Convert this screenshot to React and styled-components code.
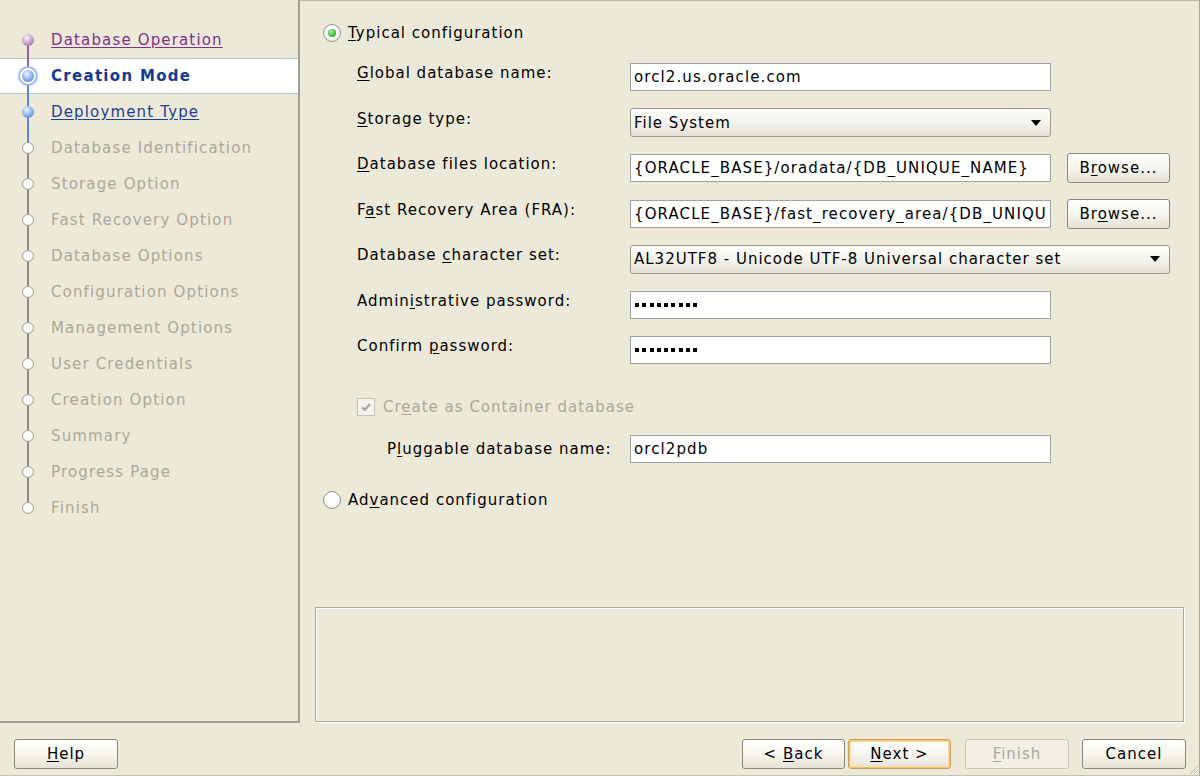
import React from 'react';
import styled, { createGlobalStyle, css } from 'styled-components';

const GlobalStyle = createGlobalStyle`
  html, body { margin: 0; padding: 0; }
  body {
    width: 1200px; height: 776px; overflow: hidden;
    background: #ECE9D8;
    font-family: "DejaVu Sans", Verdana, sans-serif;
  }
`;

const Window = styled.div`
  position: relative;
  width: 1200px; height: 776px;
  box-sizing: border-box;
  display: flex; flex-direction: column;
  background: #ECE9D8;
  border-right: 1px solid #a7a69c;
  border-bottom: 1px solid #c4c2b5;
  font-family: "DejaVu Sans", Verdana, sans-serif;
  font-size: 15px;
  letter-spacing: 1px;
  color: #000;
`;

const Body = styled.div`
  display: flex;
  height: 723px;
`;

/* ---------- Sidebar ---------- */
const Sidebar = styled.nav`
  width: 300px;
  flex: none;
  box-sizing: border-box;
  border-right: 2px solid #a09f95;
  border-bottom: 2px solid #a09f95;
  padding-top: 22px;
`;

const lineColors = { visited: '#9b5ca0', link: '#5a86d4', pending: '#8d8d88' };

const Step = styled.div`
  height: 36px;
  box-sizing: border-box;
  display: flex;
  align-items: center;
  ${p => p.$current && css`
    background: #fff;
    border-top: 1px solid #b3c3da;
    border-bottom: 1px solid #b3c3da;
  `}
`;

const Track = styled.div`
  position: relative;
  width: 51px;
  height: 36px;
  flex: none;
  display: flex;
  align-items: center;
  padding-left: 18px;
  box-sizing: border-box;
  &::before, &::after {
    content: '';
    position: absolute;
    left: 27px;
    width: 2px;
  }
  &::before {
    top: 0; height: 18px;
    background: ${p => p.$top || 'transparent'};
  }
  &::after {
    bottom: 0; height: 18px;
    background: ${p => p.$bottom || 'transparent'};
  }
`;

const NodeBox = styled.div`
  position: relative;
  z-index: 1;
  width: 20px; height: 20px;
  display: flex; align-items: center; justify-content: center;
`;

const bulletStyles = {
  visited: css`
    width: 12px; height: 12px;
    background: radial-gradient(circle at 40% 32%, #fbf2fb 0%, #d7b9da 35%, #a777ad 80%, #8e5a94 100%);
  `,
  current: css`
    width: 12px; height: 12px;
    background: radial-gradient(circle at 40% 32%, #f1f6ff 0%, #a9c6f2 35%, #5d8fe0 80%, #3f6fc9 100%);
    box-shadow: 0 0 0 2px #ffffff, 0 0 0 3.5px #8fb1e4, 0 0 3px 4px rgba(150,185,235,0.6);
  `,
  link: css`
    width: 12px; height: 12px;
    background: radial-gradient(circle at 40% 32%, #f1f6ff 0%, #a9c6f2 35%, #5d8fe0 80%, #3f6fc9 100%);
  `,
  pending: css`
    width: 12px; height: 12px;
    border: 1px solid #a4a49c;
    background: radial-gradient(circle at 42% 35%, #ffffff 45%, #dcdcd6 100%);
  `,
};

const Bullet = styled.span`
  display: block;
  border-radius: 50%;
  box-sizing: border-box;
  ${p => bulletStyles[p.$state]}
`;

const stepText = {
  visited: css`color: #83308b; text-decoration: underline;`,
  current: css`color: #153b8e; font-weight: bold; letter-spacing: 1.3px;`,
  link: css`color: #1d3d96; text-decoration: underline;`,
  pending: css`color: #aca899;`,
};

const StepLabel = styled.span`
  white-space: nowrap;
  letter-spacing: 1.15px;
  text-underline-offset: 2px;
  ${p => stepText[p.$state]}
`;

/* ---------- Main ---------- */
const Main = styled.main`
  flex: 1;
  display: flex;
  flex-direction: column;
  padding: 0 15px;
  border-top: 1px solid #b9b8ae;
  min-width: 0;
`;

const Form = styled.div`
  flex: 1;
  padding: 23px 0 0 8px;
  display: flex;
  flex-direction: column;
`;

const OptionRow = styled.label`
  display: flex;
  align-items: center;
  gap: 7px;
  height: 18px;
  margin-top: ${p => p.$mt || 0}px;
  white-space: nowrap;
`;

const Radio = styled.span`
  width: 18px; height: 18px;
  flex: none;
  box-sizing: border-box;
  border-radius: 50%;
  border: 1px solid #97968c;
  background: radial-gradient(circle at 50% 40%, #ffffff 40%, #e3e1d6 100%);
  display: flex; align-items: center; justify-content: center;
  &::after {
    content: '';
    display: ${p => (p.$checked ? 'block' : 'none')};
    width: 8px; height: 8px;
    border-radius: 50%;
    background: radial-gradient(circle at 40% 35%, #b6f0a8 0%, #44c03a 55%, #1f8d1c 100%);
  }
`;

const U = styled.span`
  text-decoration: underline;
  text-underline-offset: 2px;
`;

const FieldGrid = styled.div`
  margin: 20px 0 0 34px;
  display: grid;
  grid-template-columns: 257px 421px 103px;
  column-gap: 16px;
  grid-auto-rows: 30px;
  row-gap: 15.5px;
`;

const Label = styled.span`
  grid-column: 1;
  align-self: start;
  line-height: 16px;
  padding-top: 3px;
  white-space: nowrap;
`;

const TextField = styled.div`
  grid-column: 2;
  align-self: center;
  height: 28px;
  width: ${p => p.$width || 'auto'};
  box-sizing: border-box;
  border: 1px solid #9fa2a5;
  background: #fff;
  display: flex;
  align-items: center;
  padding: 0 3px;
  overflow: hidden;
`;

const FieldText = styled.span`
  display: block;
  width: 100%;
  overflow: hidden;
  white-space: nowrap;
  letter-spacing: 1.1px;
`;

const Select = styled.div`
  grid-column: ${p => (p.$wide ? '2 / 4' : '2')};
  align-self: center;
  height: 29px;
  box-sizing: border-box;
  border: 1px solid #9b9a90;
  border-radius: 3px;
  background: linear-gradient(#fdfdfb 0%, #f4f3ee 50%, #e4e2d6 100%);
  display: flex;
  align-items: center;
  justify-content: space-between;
  padding: 0 9px 0 3px;
  white-space: nowrap;
  letter-spacing: 1px;
`;

const Arrow = styled.span`
  width: 0; height: 0;
  border-left: 5px solid transparent;
  border-right: 5px solid transparent;
  border-top: 6px solid #000;
`;

const Button = styled.button`
  flex: none;
  width: ${p => p.$w || 103}px;
  height: 30px;
  margin-left: ${p => p.$ml || 0}px;
  box-sizing: border-box;
  border: 1px solid #8a897f;
  border-radius: 3px;
  background: linear-gradient(#ffffff 0%, #f7f6f1 45%, #e6e3d6 100%);
  font-family: "DejaVu Sans", Verdana, sans-serif;
  font-size: 15px;
  letter-spacing: 1px;
  color: #000;
  padding: 0;
  ${p => p.$grid && css`grid-column: 3; align-self: center;`}
  ${p => p.$focus && css`
    border-color: #c7a25e;
    box-shadow: inset 0 0 0 1px #f6c36c, inset 0 0 0 2px #fbdca3;
  `}
  ${p => p.$disabled && css`
    border-color: #cac8bb;
    background: #f1efe6;
    color: #aca899;
  `}
`;

const Dots = styled.span`
  display: flex;
  gap: 3.3px;
  padding-left: 1px;
  & > i {
    display: block;
    width: 4px; height: 4px;
    background: #000;
  }
`;

const CheckRow = styled.label`
  display: flex;
  align-items: center;
  gap: 8px;
  height: 18px;
  margin: 33px 0 0 34px;
  color: #aca899;
  white-space: nowrap;
`;

const CheckBox = styled.span`
  width: 18px; height: 18px;
  box-sizing: border-box;
  border: 1px solid #c4c2b5;
  background: #f4f3ee;
  display: flex; align-items: center; justify-content: center;
`;

const PdbRow = styled.div`
  display: flex;
  align-items: center;
  margin: 19px 0 0 64px;
  height: 28px;
`;

const PdbLabel = styled.span`
  width: 243px;
  white-space: nowrap;
`;

const MessageBox = styled.div`
  height: 115px;
  margin-bottom: 1px;
  box-sizing: border-box;
  border: 1px solid #aca899;
  box-shadow: inset 1px 1px 0 #ffffff, 1px 1px 0 #ffffff;
`;

/* ---------- Button bar ---------- */
const ButtonBar = styled.div`
  flex: 1;
  display: flex;
  align-items: flex-start;
  padding: 16px 13px 0 14px;
`;

const Spacer = styled.div`
  flex: 1;
`;

const Grip = styled.svg`
  position: absolute;
  right: 0;
  bottom: 0;
`;

const steps = [
  { label: 'Database Operation', state: 'visited' },
  { label: 'Creation Mode', state: 'current' },
  { label: 'Deployment Type', state: 'link' },
  { label: 'Database Identification', state: 'pending' },
  { label: 'Storage Option', state: 'pending' },
  { label: 'Fast Recovery Option', state: 'pending' },
  { label: 'Database Options', state: 'pending' },
  { label: 'Configuration Options', state: 'pending' },
  { label: 'Management Options', state: 'pending' },
  { label: 'User Credentials', state: 'pending' },
  { label: 'Creation Option', state: 'pending' },
  { label: 'Summary', state: 'pending' },
  { label: 'Progress Page', state: 'pending' },
  { label: 'Finish', state: 'pending' },
];

const Mn = ({ text, at }) => (
  <>
    {text.slice(0, at)}
    <U>{text[at]}</U>
    {text.slice(at + 1)}
  </>
);

const PasswordDots = () => (
  <Dots>
    {Array.from({ length: 9 }).map((_, i) => <i key={i} />)}
  </Dots>
);

function lineAbove(prev) {
  if (!prev) return null;
  if (prev.state === 'visited') return lineColors.visited;
  if (prev.state === 'pending') return lineColors.pending;
  return lineColors.link;
}

function lineBelow(s, next) {
  if (!next) return null;
  if (s.state === 'visited') return lineColors.visited;
  if (s.state === 'pending') return lineColors.pending;
  return lineColors.link;
}

export default function App() {
  return (
    <>
      <GlobalStyle />
      <Window>
        <Body>
          <Sidebar>
            {steps.map((s, i) => (
              <Step key={s.label} $current={s.state === 'current'}>
                <Track $top={lineAbove(steps[i - 1])} $bottom={lineBelow(s, steps[i + 1])}>
                  <NodeBox><Bullet $state={s.state} /></NodeBox>
                </Track>
                <StepLabel $state={s.state}>{s.label}</StepLabel>
              </Step>
            ))}
          </Sidebar>

          <Main>
            <Form>
              <OptionRow>
                <Radio $checked />
                <span><Mn text="Typical configuration" at={0} /></span>
              </OptionRow>

              <FieldGrid>
                <Label><Mn text="Global database name:" at={0} /></Label>
                <TextField><FieldText>orcl2.us.oracle.com</FieldText></TextField>

                <Label><Mn text="Storage type:" at={0} /></Label>
                <Select>File System<Arrow /></Select>

                <Label><Mn text="Database files location:" at={0} /></Label>
                <TextField><FieldText>{'{ORACLE_BASE}/oradata/{DB_UNIQUE_NAME}'}</FieldText></TextField>
                <Button $grid><Mn text="Browse..." at={1} /></Button>

                <Label><Mn text="Fast Recovery Area (FRA):" at={1} /></Label>
                <TextField><FieldText>{'{ORACLE_BASE}/fast_recovery_area/{DB_UNIQU'}</FieldText></TextField>
                <Button $grid><Mn text="Browse..." at={2} /></Button>

                <Label>Database <Mn text="character set:" at={0} /></Label>
                <Select $wide>AL32UTF8 - Unicode UTF-8 Universal character set<Arrow /></Select>

                <Label><Mn text="Administrative password:" at={5} /></Label>
                <TextField><PasswordDots /></TextField>

                <Label>Confirm <Mn text="password:" at={0} /></Label>
                <TextField><PasswordDots /></TextField>
              </FieldGrid>

              <CheckRow>
                <CheckBox>
                  <svg width="12" height="12" viewBox="0 0 12 12">
                    <path d="M2 6.2 L4.8 9 L10 3" fill="none" stroke="#a9a79b" strokeWidth="2.2" />
                  </svg>
                </CheckBox>
                <span><Mn text="Create as Container database" at={2} /></span>
              </CheckRow>

              <PdbRow>
                <PdbLabel><Mn text="Pluggable database name:" at={1} /></PdbLabel>
                <TextField $width="421px"><FieldText>orcl2pdb</FieldText></TextField>
              </PdbRow>

              <OptionRow $mt={28}>
                <Radio />
                <span><Mn text="Advanced configuration" at={2} /></span>
              </OptionRow>
            </Form>
            <MessageBox />
          </Main>
        </Body>

        <ButtonBar>
          <Button $w={104}><Mn text="Help" at={0} /></Button>
          <Spacer />
          <Button>{'< '}<Mn text="Back" at={0} /></Button>
          <Button $ml={3} $focus><Mn text="Next" at={0} />{' >'}</Button>
          <Button $ml={14} $w={104} $disabled><Mn text="Finish" at={0} /></Button>
          <Button $ml={13} $w={104}>Cancel</Button>
        </ButtonBar>

        <Grip width="12" height="12" viewBox="0 0 12 12">
          <path d="M11 3 L3 11 M11 7 L7 11" stroke="#b9b7aa" strokeWidth="1" />
        </Grip>
      </Window>
    </>
  );
}
